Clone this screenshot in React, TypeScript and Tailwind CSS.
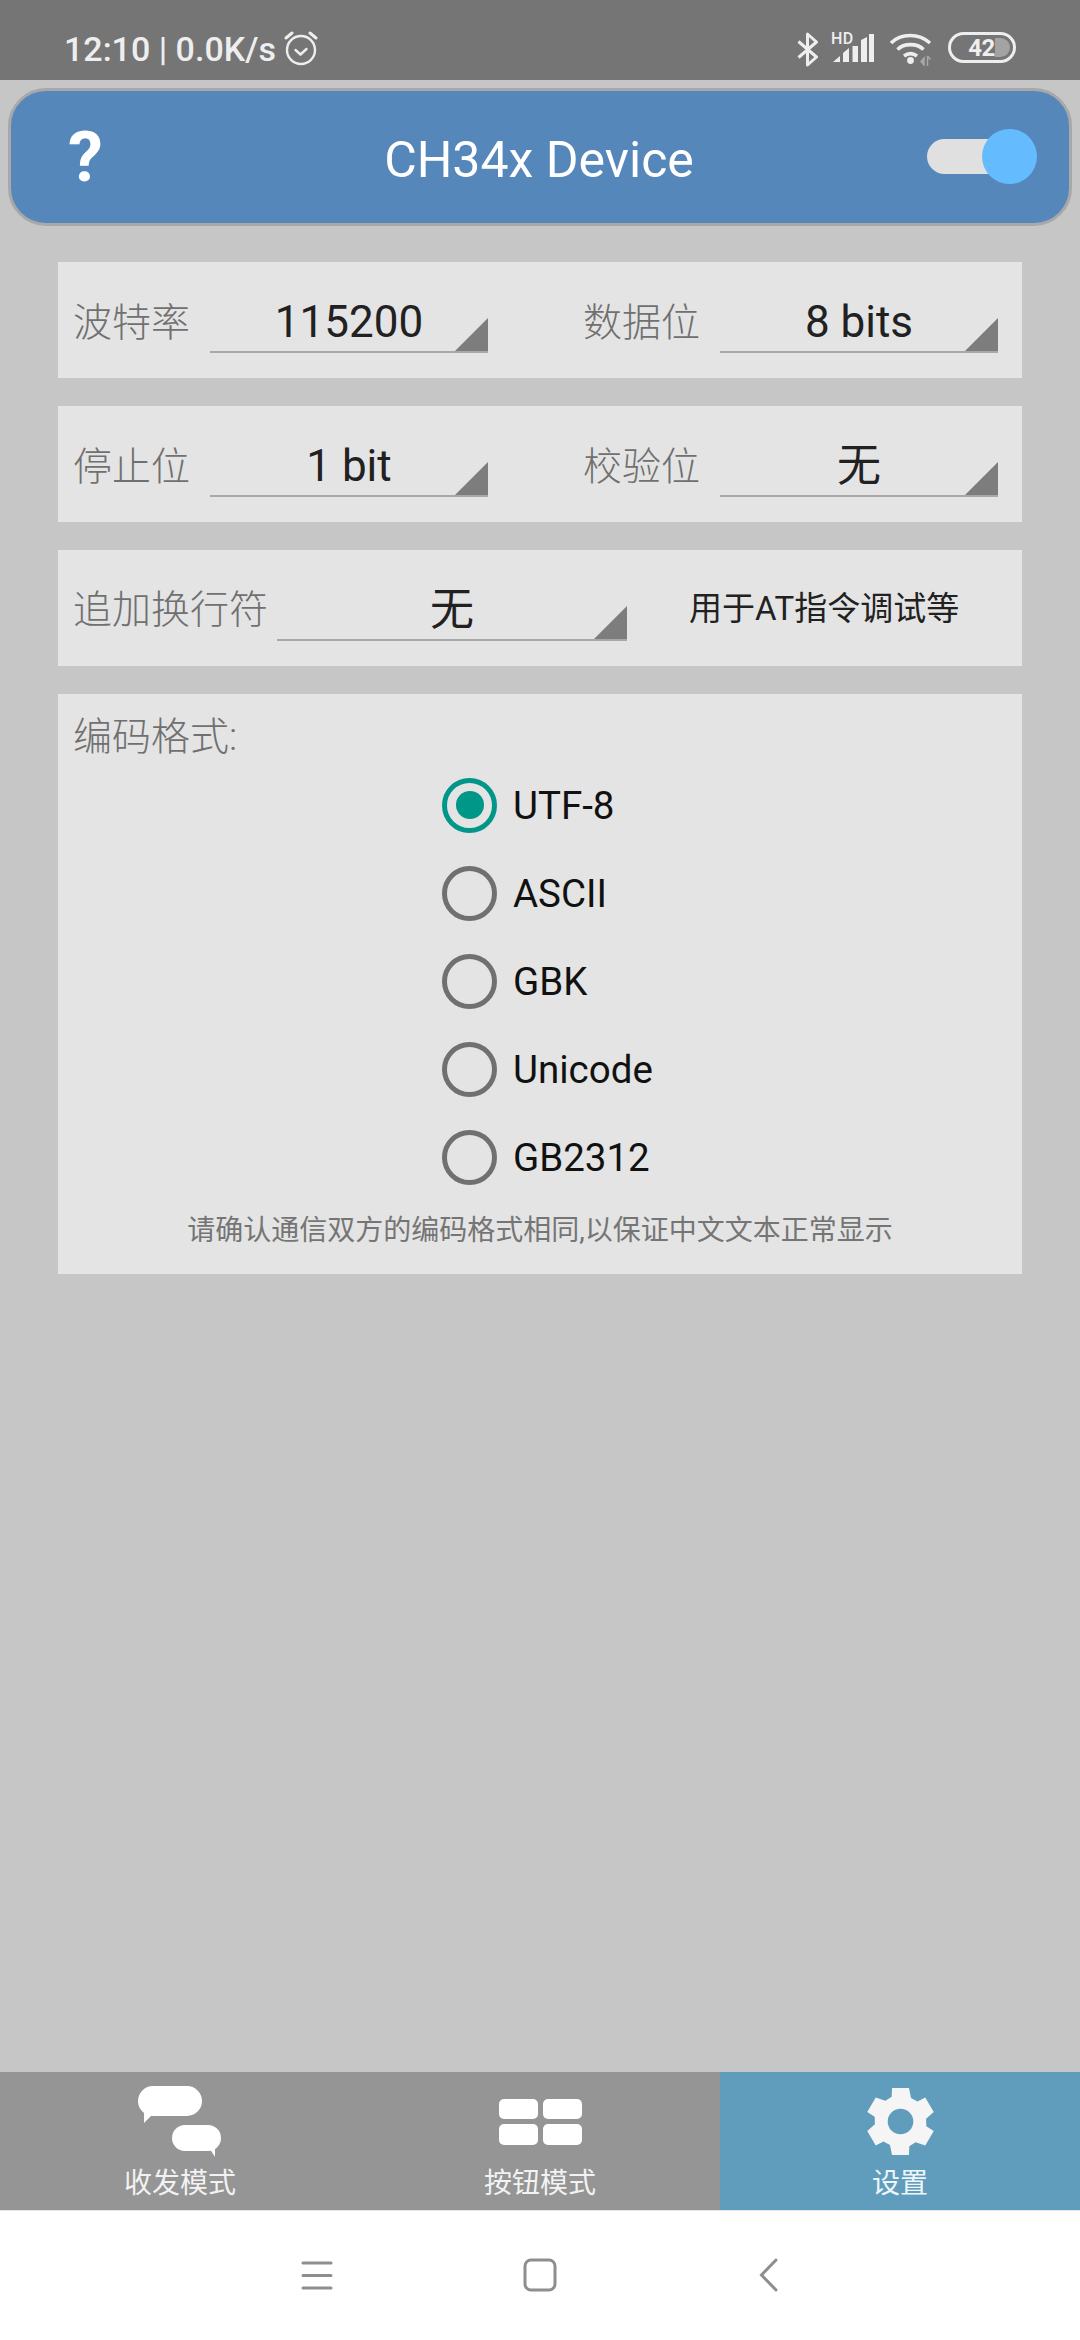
import clsx from 'clsx'

const FONT = "font-['Roboto','Noto_Sans_CJK_SC',sans-serif]"

// six tooth gear, built once from one tooth
const gearPath = () => {
  const tooth = [[-8.5, -33.5], [8.5, -33.5], [10.5, -23.5], [17, -20]]
  const pts: string[] = []
  for (let i = 0; i < 6; i++) {
    const a = (i * Math.PI) / 3
    for (const [x, y] of tooth) {
      pts.push(`${(33.5 + x * Math.cos(a) - y * Math.sin(a)).toFixed(2)} ${(33.5 + x * Math.sin(a) + y * Math.cos(a)).toFixed(2)}`)
    }
  }
  return `M${pts.join('L')}ZM33.5 20.7a12.8 12.8 0 1 0 0 25.6a12.8 12.8 0 1 0 0-25.6Z`
}

function StatusBar() {
  return (
    <div className="flex h-[80px] items-start bg-[#757575] text-[#eeeeee]">
      <div className="ml-[64px] mt-[29px] flex items-center">
        <span className="text-[34px] leading-[40px] font-medium">12:10 | 0.0K/s</span>
        <svg className="ml-[8px] mt-[-3px]" width="34" height="36" viewBox="0 0 34 36" fill="none" stroke="#eeeeee" strokeWidth="2.4">
          <circle cx="17" cy="20" r="14" />
          <path d="M11.5 20l5 4.500l6-5.500" strokeLinecap="round" strokeLinejoin="round" />
          <path d="M2 8l6-5M32 8l-6-5" strokeWidth="3" strokeLinecap="round" />
        </svg>
      </div>
      <div className="ml-auto mr-[64px] mt-[32px] flex items-start">
        <svg width="22" height="35" viewBox="0 0 22 35" fill="none" stroke="#eeeeee" strokeWidth="3">
          <path d="M1.5 9.5L19.5 25L10.5 33V2L19.5 10L1.5 25.5" strokeLinejoin="round" />
        </svg>
        <div className="relative ml-[13px] h-[32px] w-[43px]">
          <span className="absolute left-[-1px] top-[-2px] text-[16px] leading-[17px] font-medium tracking-[0.4px]">HD</span>
          <svg className="absolute left-0 top-0" width="43" height="32" viewBox="0 0 43 32" fill="#eeeeee">
            <path d="M1 30L8 24V30ZM11 30V21L17 16V30ZM20.500 30V14H26V30ZM29 30V8L35 5V30ZM37 2H42V30H37Z" />
          </svg>
        </div>
        <svg className="ml-[14px]" width="44" height="34" viewBox="0 0 44 34" fill="none" stroke="#eeeeee" strokeWidth="3.6">
          <path d="M2 11C12 1 30 1 41 11" />
          <path d="M8.5 17.5C15 11 28 11 34.5 17.5" />
          <path d="M15 24C19 21 24 21 28 24" />
          <circle cx="21.5" cy="28.5" r="3.400" fill="#eeeeee" stroke="none" />
          <path d="M35 26l-3 3.500 3 3.500ZM38.500 24v10M38.500 24l3 3.500" fill="#a8a8a8" stroke="#a8a8a8" strokeWidth="1.5" />
        </svg>
        <div className="relative ml-[15px] flex h-[31px] w-[68px] items-center justify-center overflow-hidden rounded-full border-[3px] border-[#eeeeee]">
          <div className="absolute bottom-[3px] right-[3px] top-[3px] w-[15px] rounded-r-full bg-[#a3a3a3]" />
          <span className="relative ml-[-1px] text-[24px] leading-none font-bold tracking-[-0.5px]">42</span>
        </div>
      </div>
    </div>
  )
}

function Header() {
  return (
    <div className="relative mx-[8px] mt-[8px] flex h-[138px] items-center justify-center rounded-[38px] border-[3px] border-[#a8a8a8] bg-[#5587bb]">
      <span className="absolute left-[57px] top-[27px] text-[70px] leading-[78px] font-bold text-white">?</span>
      <span className="ml-[-2px] mt-[6px] text-[50px] leading-[64px] text-white">CH34x Device</span>
      <div className="absolute left-[916px] top-[48px] h-[35px] w-[90px] rounded-full bg-[#e0e0e0]" />
      <div className="absolute left-[971px] top-[38px] h-[55px] w-[55px] rounded-full bg-[#64bcff]" />
    </div>
  )
}

function Spinner({ value, width }: { value: string; width: string }) {
  return (
    <div className={clsx('relative flex h-[66px] items-center justify-center border-b-2 border-[#a8a8a8] text-[44px] text-[#212121]', width)}>
      <span className="mt-[5px] leading-[52px]">{value}</span>
      <svg className="absolute bottom-0 right-0" width="33" height="33" viewBox="0 0 33 33" fill="#7d7d7d">
        <path d="M33 0V33H0Z" />
      </svg>
    </div>
  )
}

function Field({ label, value }: { label: string; value: string }) {
  return (
    <div className="flex w-[510px] shrink-0 items-center pl-[15px] last:w-auto">
      <span className="mt-[6px] w-[137px] text-[39px] leading-[52px] font-light text-[#707070]">{label}</span>
      <Spinner value={value} width="w-[278px]" />
    </div>
  )
}

function Card({ children, className }: { children: React.ReactNode; className?: string }) {
  return <div className={clsx('mx-[58px] bg-[#e4e4e4]', className)}>{children}</div>
}

const ENCODINGS = ['UTF-8', 'ASCII', 'GBK', 'Unicode', 'GB2312']

function Radio({ label, checked }: { label: string; checked?: boolean }) {
  return (
    <div className="flex h-[88px] items-center pl-[384px]">
      <div
        className={clsx(
          'flex h-[55px] w-[55px] items-center justify-center rounded-full border-[5px]',
          checked ? 'border-[#009688]' : 'border-[#707070]'
        )}
      >
        {checked && <div className="h-[28px] w-[28px] rounded-full bg-[#009688]" />}
      </div>
      <span className="ml-[16px] mt-[2px] text-[38.5px] leading-[48px] text-[#111111]">{label}</span>
    </div>
  )
}

function Tab({ label, active, children }: { label: string; active?: boolean; children: React.ReactNode }) {
  return (
    <div className={clsx('flex w-[360px] flex-col items-center', active ? 'bg-[#609cbc] text-[#eef6fa]' : 'bg-[#959595] text-[#f2f2f2]')}>
      <div className="flex h-[90px] w-full items-start justify-center">{children}</div>
      <span className="mt-[4px] text-[28px] leading-[36px]">{label}</span>
    </div>
  )
}

function BottomTabs() {
  return (
    <div className="flex h-[138px]">
      <Tab label="收发模式">
        <svg className="ml-[-1px] mt-[14px]" width="84" height="72" viewBox="0 0 84 72" fill="white">
          <rect x="0" y="0" width="64" height="30" rx="15" />
          <path d="M6 24V37L17 26Z" />
          <rect x="34" y="39" width="49" height="26" rx="13" />
          <path d="M70 60L77 71V60Z" />
        </svg>
      </Tab>
      <Tab label="按钮模式">
        <div className="mt-[27px] grid grid-cols-2 gap-x-[5px] gap-y-[5px]">
          <div className="h-[20px] w-[39px] rounded-[5px] bg-white" />
          <div className="h-[20px] w-[39px] rounded-[5px] bg-white" />
          <div className="h-[21px] w-[39px] rounded-[5px] bg-white" />
          <div className="h-[21px] w-[39px] rounded-[5px] bg-white" />
        </div>
      </Tab>
      <Tab label="设置" active>
        <svg className="mt-[16px]" width="67" height="67" viewBox="0 0 67 67" fill="#f5f5f5">
          <path fillRule="evenodd" d={gearPath()} />
        </svg>
      </Tab>
    </div>
  )
}

function NavBar() {
  return (
    <div className="relative flex h-[130px] items-start border-t border-[#e6e6e6] bg-white">
      <svg className="ml-[301px] mt-[50px]" width="32" height="30" viewBox="0 0 32 30" fill="none" stroke="#8e8e8e" strokeWidth="3" strokeLinecap="round">
        <path d="M2 2H30M2 14.500H30M2 27H30" />
      </svg>
      <svg className="ml-[190px] mt-[47px]" width="34" height="34" viewBox="0 0 34 34" fill="none" stroke="#8e8e8e" strokeWidth="3">
        <rect x="2" y="2" width="30" height="30" rx="6" />
      </svg>
      <svg className="ml-[202px] mt-[47px]" width="20" height="34" viewBox="0 0 20 34" fill="none" stroke="#8e8e8e" strokeWidth="3" strokeLinecap="round">
        <path d="M17 2L2.500 17L17 32" />
      </svg>
    </div>
  )
}

export default function App() {
  return (
    <div className={clsx('flex h-[2340px] w-[1080px] flex-col overflow-hidden bg-[#c6c6c6]', FONT)}>
      <StatusBar />
      <Header />
      <div className="mt-[36px] flex flex-1 flex-col gap-[28px]">
        <Card className="flex h-[116px] items-center">
          <Field label="波特率" value="115200" />
          <Field label="数据位" value="8 bits" />
        </Card>
        <Card className="flex h-[116px] items-center">
          <Field label="停止位" value="1 bit" />
          <Field label="校验位" value="无" />
        </Card>
        <Card className="flex h-[116px] items-center pl-[15px]">
          <span className="mt-[4px] w-[204px] text-[39px] leading-[52px] font-light text-[#707070]">追加换行符</span>
          <Spinner value="无" width="w-[350px]" />
          <span className="ml-[62px] mt-[2px] text-[33px] leading-[44px] text-[#212121]">用于AT指令调试等</span>
        </Card>
        <Card className="h-[580px] pt-[17px]">
          <div className="h-[50px] pl-[15px] text-[39px] leading-[52px] font-light text-[#707070]">编码格式:</div>
          {ENCODINGS.map((name, i) => (
            <Radio key={name} label={name} checked={i === 0} />
          ))}
          <div className="mt-[10px] text-center text-[28px] leading-[40px] text-[#757575]">
            请确认通信双方的编码格式相同,以保证中文文本正常显示
          </div>
        </Card>
      </div>
      <BottomTabs />
      <NavBar />
    </div>
  )
}
